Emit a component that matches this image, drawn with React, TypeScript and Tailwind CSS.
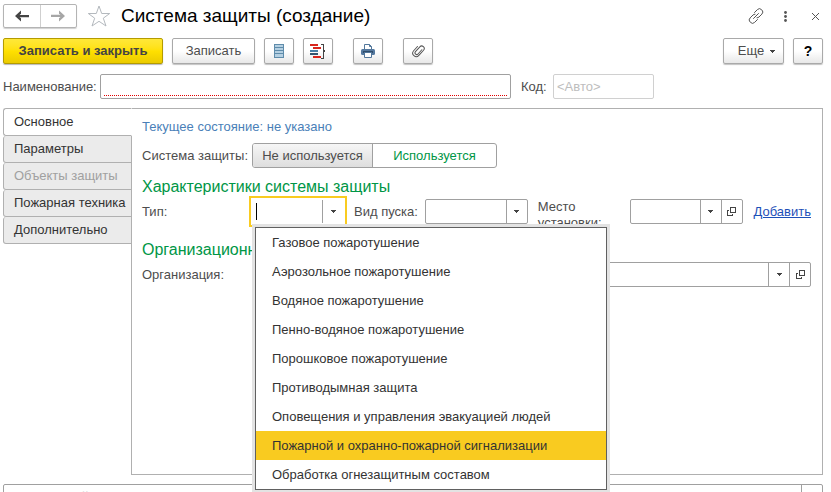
import {ReactNode, useState} from "react";
import clsx from "clsx";

const tabs = [
    {title: "Основное"},
    {title: "Параметры"},
    {title: "Объекты защиты", disabled: true},
    {title: "Пожарная техника"},
    {title: "Дополнительно"},
];

const systemTypes = [
    "Газовое пожаротушение",
    "Аэрозольное пожаротушение",
    "Водяное пожаротушение",
    "Пенно-водяное пожаротушение",
    "Порошковое пожаротушение",
    "Противодымная защита",
    "Оповещения и управления эвакуацией людей",
    "Пожарной и охранно-пожарной сигнализации",
    "Обработка огнезащитным составом",
];

const buttonLook = "h-[26px] shrink-0 rounded-[2px] border border-[#a9a9a9] bg-linear-to-b from-white from-50% to-[#e8e8e8] shadow-[0_1px_1px_#c4c4c4] flex items-center justify-center";

const ToolButton = ({label, className, children}: { label?: string, className?: string, children: ReactNode }) => (
    <button type="button" aria-label={label} className={clsx(buttonLook, className)}>{children}</button>
);

const CaretIcon = () => (
    <svg width="5" height="3" viewBox="0 0 5 3" fill="#444" shapeRendering="crispEdges">
        <path d="M0 0h5v1H4v1H3v1H2V2H1V1H0z"/>
    </svg>
);

const OpenIcon = () => (
    <svg width="9" height="9" viewBox="0 0 9 9" fill="none" stroke="#444" shapeRendering="crispEdges">
        <path d="M3.500 .5h5v5h-5zM2 3.500H.5v5h5V7"/>
    </svg>
);

const ArrowIcon = ({back}: { back?: boolean }) => (
    <svg width="14" height="12" viewBox="0 0 14 12" className={back ? "" : "rotate-180"}>
        <path fill={back ? "#444" : "#a6a6a6"} d="M0 6L6 .5v3.200L4.500 5H14v2.200H4.500L6 8.300v3.200z"/>
    </svg>
);

const StarIcon = () => (
    <svg width="24" height="22" viewBox="0 0 24 22" fill="none" stroke="#b4b9be">
        <path d="M12 1l2.700 7.500h8L16.300 13.200l2.700 7.800-7-4.700-7 4.700 2.700-7.800L1.300 8.500h8z"/>
    </svg>
);

const LinkIcon = () => (
    <svg width="16" height="16" viewBox="0 0 16 16" fill="none" stroke="#555" strokeLinecap="round">
        <path d="M5.500 10.500l5-5"/>
        <path d="M6.500 4.500l2.900-2.900a2.900 2.900 0 0 1 4.100 0l.4.400a2.900 2.900 0 0 1 0 4.100l-2.900 2.900a2.900 2.900 0 0 1-2 .8"/>
        <path d="M9.500 11.500l-2.900 2.900a2.900 2.900 0 0 1-4.100 0l-.4-.4a2.900 2.900 0 0 1 0-4.100L5 7a2.900 2.900 0 0 1 2-.8"/>
    </svg>
);

const ListIcon = () => (
    <svg width="10" height="14" viewBox="0 0 10 14" shapeRendering="crispEdges">
        <path fill="#b5d0e2" d="M0 0h10v14H0z"/>
        <path fill="none" stroke="#5f8cab" d="M.5 .5h9v13h-9zM1 3.500h8M1 6.500h8M1 9.500h8"/>
    </svg>
);

const StructureIcon = () => (
    <svg width="16" height="15" viewBox="0 0 16 15" shapeRendering="crispEdges">
        <path fill="#d8261c" d="M0 0h8v2H0zM3 3h8v2H3zM3 12h8v2H3z"/>
        <path fill="#4a81a8" d="M0 6h8v2H0z"/>
        <path fill="#35566f" d="M0 9h8v2H0z"/>
        <path fill="none" stroke="#444" d="M11 .5h2.500v6H15M11 14.500h2.500v-7H15"/>
    </svg>
);

const PrinterIcon = () => (
    <svg width="14" height="14" viewBox="0 0 14 14">
        <path fill="#fff" stroke="#52779b" d="M3.500 6V.5h5l2 2V6"/>
        <path fill="none" stroke="#52779b" d="M8.500 .5v2h2"/>
        <rect y="5" width="14" height="6" rx="1.500" fill="#55799f"/>
        <path fill="#2f4d6b" d="M2 7h10v2H2z"/>
        <path fill="#fff" stroke="#52779b" d="M3.500 8.500h7v5h-7z"/>
    </svg>
);

const ClipIcon = () => (
    <svg width="14" height="14" viewBox="0 0 14 14" fill="none" stroke="#555" strokeLinecap="round">
        <path transform="rotate(42 7 7)" d="M9 3.500v5.700a1.700 1.700 0 0 1-3.400 0V2.700a2.500 2.500 0 0 1 5 0v7a3.500 3.500 0 0 1-7 0V4"/>
    </svg>
);

type FieldProps = { id: string, label: string, open?: boolean, active?: boolean, className?: string, children?: ReactNode };

const PickField = ({id, label, open, active, className, children}: FieldProps) => (
    <div className={clsx("relative flex items-stretch bg-white", className,
        active ? "h-[27px] shrink-0 ring-2 ring-[#f9cb20]" : "h-[25px] rounded-[2px] border border-[#a0a0a0]")}>
        {active && <span className="my-[5px] ml-[5px] w-px shrink-0 bg-black"/>}
        <input id={id} className="w-full min-w-0 flex-1 px-1.5 outline-none" autoComplete="off"/>
        <button type="button" aria-label={label + ": выбрать"}
                className={clsx("flex shrink-0 items-center justify-center border-l border-[#a0a0a0]", active ? "my-0.5 w-[23px] pr-0.5" : "w-[21px]")}>
            <CaretIcon/>
        </button>
        {open && (
            <button type="button" aria-label={label + ": открыть"}
                    className="flex w-[21px] shrink-0 items-center justify-center border-l border-[#a0a0a0]">
                <OpenIcon/>
            </button>
        )}
        {children}
    </div>
);

const App = () => {
    const [tab, setTab] = useState(0);
    const [used, setUsed] = useState(true);
    const [selected, setSelected] = useState(7);

    return (
        <div className="flex h-screen flex-col overflow-hidden bg-white pl-[3px] pr-2 font-['Liberation_Sans',Arial,sans-serif] text-[13px] leading-4 text-[#4d4d4d]">
            <header className="flex h-8 shrink-0 items-center">
                <div className="flex h-6 w-[74px] rounded-[2px] border border-[#b4b4b4] shadow-[0_1px_1px_#d0d0d0]">
                    <button type="button" aria-label="Назад" className="flex flex-1 items-center justify-center border-r border-[#cfcfcf]">
                        <ArrowIcon back/>
                    </button>
                    <button type="button" aria-label="Вперед" className="flex flex-1 items-center justify-center">
                        <ArrowIcon/>
                    </button>
                </div>
                <button type="button" aria-label="В избранное" className="ml-2.5"><StarIcon/></button>
                <h1 className="ml-2.5 flex-1 text-[19px] leading-6 text-black">Система защиты (создание)</h1>
                <button type="button" aria-label="Ссылка"><LinkIcon/></button>
                <button type="button" aria-label="Меню" className="ml-5">
                    <svg width="3" height="11" viewBox="0 0 3 11" fill="#555">
                        <circle cx="1.500" cy="1.500" r="1.400"/>
                        <circle cx="1.500" cy="5.500" r="1.400"/>
                        <circle cx="1.500" cy="9.500" r="1.400"/>
                    </svg>
                </button>
                <button type="button" aria-label="Закрыть" className="ml-[25px] mr-1">
                    <svg width="7" height="7" viewBox="0 0 7 7" stroke="#555"><path d="M0 0l7 7M7 0L0 7"/></svg>
                </button>
            </header>

            <div className="mt-1.5 flex shrink-0 items-center">
                <button type="button"
                        className="h-[26px] w-40 shrink-0 rounded-[2px] border border-[#b49b00] bg-linear-to-b from-[#ffe838] via-[#ffe000] to-[#ebcb00] font-bold text-[#444] shadow-[0_1px_1px_#b8b8b8]">
                    Записать и закрыть
                </button>
                <ToolButton className="ml-[9px] w-[83px]">Записать</ToolButton>
                <ToolButton label="Список" className="ml-[9px] w-[30px]"><ListIcon/></ToolButton>
                <ToolButton label="Структура" className="ml-[9px] w-[30px]"><StructureIcon/></ToolButton>
                <ToolButton label="Печать" className="ml-5 w-[30px]"><PrinterIcon/></ToolButton>
                <ToolButton label="Файлы" className="ml-5 w-[30px]"><ClipIcon/></ToolButton>
                <ToolButton className="ml-auto w-[61px] gap-1.5 pl-1.5">Еще <CaretIcon/></ToolButton>
                <ToolButton label="Справка" className="ml-[9px] w-[30px] text-[14px] font-bold text-black">?</ToolButton>
            </div>

            <div className="mt-2.5 flex shrink-0 items-center">
                <label htmlFor="name" className="w-[97px] shrink-0">Наименование:</label>
                <div className="flex h-[25px] w-[411px] rounded-[2px] border border-[#a0a0a0] px-[3px] pb-0.5">
                    <input id="name" className="w-full border-b border-dotted border-[#e00000] px-0.5 outline-none"/>
                </div>
                <label htmlFor="code" className="ml-2.5 w-8 shrink-0">Код:</label>
                <input id="code" placeholder="<Авто>"
                       className="h-[25px] w-[101px] rounded-[2px] border border-[#d0d0d0] px-[3px] outline-none placeholder:text-[#bdbdbd]"/>
            </div>

            <div className="mt-[9px] flex min-h-0 flex-1">
                <nav className="z-1 -mr-px w-[129px] shrink-0">
                    {tabs.map((ele, i) => (
                        <button key={ele.title} type="button" disabled={ele.disabled} onClick={() => setTab(i)}
                                className={clsx("block w-full rounded-l-[3px] border-b border-l border-r border-[#b0b0b0] pl-2.5 text-left",
                                    i === 0 ? "h-7 border-t" : "h-[27px]",
                                    i === tab ? "border-r-white bg-white" : "bg-[#ebebeb]",
                                    ele.disabled ? "text-[#a0a0a0]" : "text-[#333]")}>
                            {ele.title}
                        </button>
                    ))}
                </nav>
                <main className="min-w-0 flex-1 border border-[#b0b0b0] pl-2.5 pr-[11px] pt-2">
                    <p className="leading-5 text-[#4a7fb8]">Текущее состояние: не указано</p>

                    <div className="mt-1.5 flex items-center">
                        <span className="w-[110px] shrink-0">Система защиты:</span>
                        <div className="flex h-[25px] w-[245px] overflow-hidden rounded-[3px] border border-[#a0a0a0]">
                            <button type="button" aria-pressed={!used} onClick={() => setUsed(false)}
                                    className="w-[120px] border-r border-[#a0a0a0] bg-linear-to-b from-[#f6f6f6] to-[#dedede]">
                                Не используется
                            </button>
                            <button type="button" aria-pressed={used} onClick={() => setUsed(true)}
                                    className="flex-1 text-[#009646]">
                                Используется
                            </button>
                        </div>
                    </div>

                    <h2 className="mb-0.5 mt-[9px] text-[16px] leading-5 text-[#009646]">Характеристики системы защиты</h2>
                    <div className="flex h-[25px] items-center">
                        <label htmlFor="type" className="w-[109px] shrink-0">Тип:</label>
                        <PickField id="type" label="Тип" active className="w-[94px]">
                            <ul role="listbox" aria-label="Тип"
                                className="absolute left-1 top-[29px] z-10 w-[352px] border border-[#606060] bg-white text-[#333] shadow-[0_0_0_3px_#e3e3e3]">
                                {systemTypes.map((ele, i) => (
                                    <li key={ele} role="option" aria-selected={i === selected} onMouseEnter={() => setSelected(i)}
                                        className={clsx("px-4 leading-[29px]", i === selected && "bg-[#f9cb20]")}>
                                        {ele}
                                    </li>
                                ))}
                            </ul>
                        </PickField>
                        <label htmlFor="launch" className="ml-[9px] w-[71px] shrink-0">Вид пуска:</label>
                        <PickField id="launch" label="Вид пуска" className="w-[103px]"/>
                        <label htmlFor="place" className="ml-2.5 w-[92px] shrink-0 self-start pr-4">Место установки:</label>
                        <PickField id="place" label="Место установки" open className="w-[113px]"/>
                        <a href="#" className="ml-[11px] text-[#1d50b8] underline">Добавить</a>
                    </div>

                    <h2 className="mb-0.5 mt-4 text-[16px] leading-5 text-[#009646]">Организационные данные</h2>
                    <div className="flex items-center">
                        <label htmlFor="org" className="w-[110px] shrink-0">Организация:</label>
                        <PickField id="org" label="Организация" open className="flex-1"/>
                    </div>
                </main>
            </div>

            <footer className="mt-[9px] h-2 shrink-0 overflow-hidden">
                <div className="flex h-[25px] rounded-[2px] border border-[#a0a0a0]">
                    <input aria-label="Комментарий" placeholder="Комментарий"
                           className="flex-1 px-[3px] outline-none placeholder:text-[#bdbdbd]"/>
                    <button type="button" aria-label="Выбрать" className="w-[21px] border-l border-[#a0a0a0]"/>
                </div>
            </footer>
        </div>
    );
}

export default App;
